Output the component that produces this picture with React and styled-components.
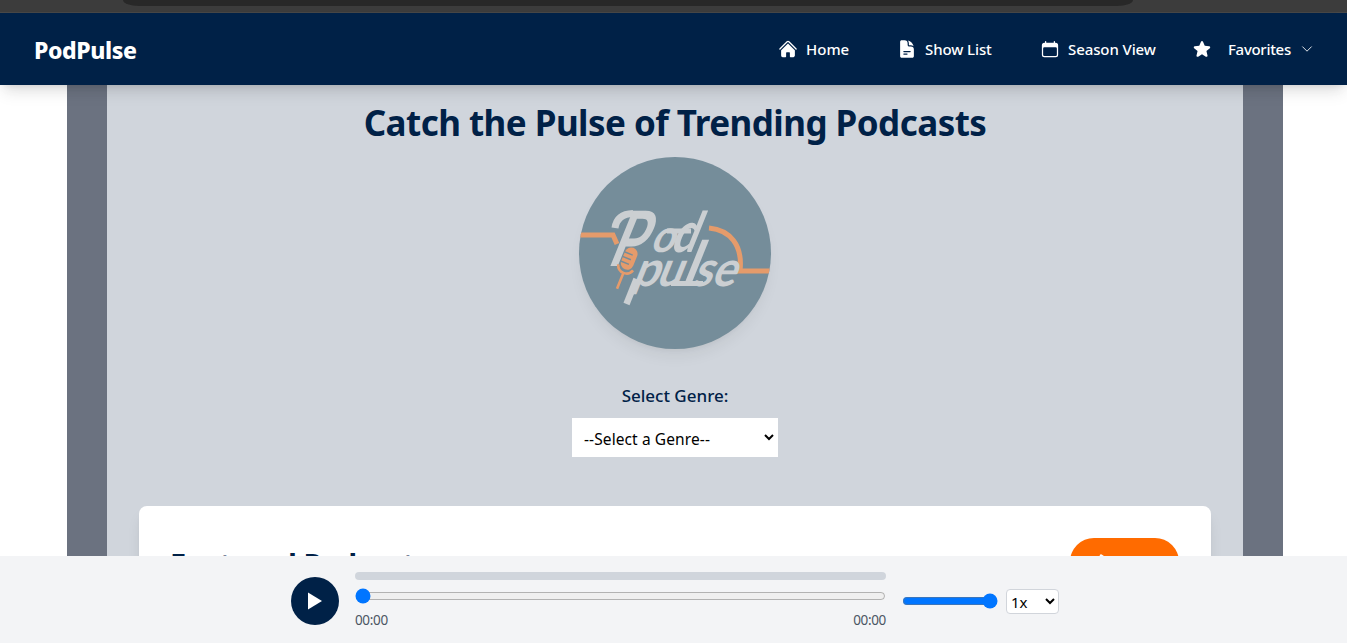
import React from "react";
import styled, { createGlobalStyle } from "styled-components";
import { HiHome, HiDocumentText, HiCalendar, HiStar, HiOutlineChevronDown } from "react-icons/hi2";

const NAVY = "#002147";

const GlobalStyle = createGlobalStyle`
  *, *::before, *::after { box-sizing: border-box; }
  body { margin: 0; background: #fff; font-family: "Noto Sans", "Open Sans", sans-serif; color: ${NAVY}; overflow: hidden; }
`;

const Page = styled.div`
  display: flex;
  flex-direction: column;
  height: 643px;
  overflow: hidden;
`;

const BrowserEdge = styled.div`
  flex: none;
  height: 13px;
  padding: 0 214px 0 123px;
  background: #3c3c3c;
  border-bottom: 1px solid #484848;
`;

const AddressBar = styled.div`
  height: 6px;
  background: #282828;
  border-radius: 0 0 16px 16px / 0 0 6px 6px;
`;

const Header = styled.header`
  flex: none;
  position: relative;
  z-index: 2;
  display: flex;
  align-items: center;
  justify-content: space-between;
  height: 72px;
  padding: 0 33px 0 35px;
  background: ${NAVY};
  color: #fff;
  box-shadow: 0 10px 15px -3px rgba(0, 0, 0, 0.1), 0 4px 6px -4px rgba(0, 0, 0, 0.1), 0 5px 15px -5px rgba(0, 0, 0, 0.06);
`;

const Brand = styled.div`
  font-size: 23px;
  font-weight: 800;
  line-height: 32px;
  letter-spacing: -0.4px;
  padding-top: 2px;
  margin-left: -1px;
`;

const Nav = styled.nav`
  display: flex;
  align-items: center;
`;

const NavItem = styled.a`
  display: flex;
  align-items: center;
  width: ${(p) => p.$width}px;
  gap: ${(p) => p.$gap || 8}px;
  white-space: nowrap;
  font-size: 15px;
  font-weight: 500;
  line-height: 24px;
  letter-spacing: ${(p) => p.$tracking || 0}px;

  svg { flex: none; }
`;

const MenuArrow = styled(HiOutlineChevronDown)`
  margin-left: -7px;
`;

const Main = styled.main`
  flex: 1;
  min-height: 0;
  overflow: hidden;
  width: 1216px;
  margin-left: 67px;
  padding: 18px 32px 0;
  border: solid #6b7280;
  border-width: 0 40px;
  background: #d0d5dc;
  display: flex;
  flex-direction: column;
  align-items: center;
`;

const Title = styled.h1`
  margin: 0;
  font-size: 35px;
  font-weight: 700;
  line-height: 40px;
  letter-spacing: -0.54px;
  white-space: nowrap;
`;

const LogoDisc = styled.div`
  flex: none;
  width: 192px;
  height: 192px;
  margin-top: 14px;
  border-radius: 50%;
  overflow: hidden;
  background: #758d9a;
  box-shadow: 0 10px 15px -3px rgba(0, 0, 0, 0.06), 0 4px 6px -4px rgba(0, 0, 0, 0.06);
`;

const GenreLabel = styled.label`
  margin-top: 33px;
  font-size: 17px;
  font-weight: 500;
  line-height: 28px;
`;

const GenreSelect = styled.select`
  flex: none;
  width: 206px;
  height: 39px;
  margin-top: 8px;
  padding: 2px 0 0 8px;
  border: 0;
  border-right: 1px solid #fff;
  border-radius: 0;
  background: #fff;
  color: #000;
  font: 400 15.5px "Noto Sans", sans-serif;
  letter-spacing: 0.1px;
`;

const Card = styled.section`
  flex: none;
  display: flex;
  justify-content: space-between;
  align-items: flex-start;
  width: 1072px;
  height: 300px;
  margin-top: 49px;
  padding: 32px 32px 0 31px;
  border-radius: 8px;
  background: #fff;
  box-shadow: 0 10px 15px -3px rgba(0, 0, 0, 0.1), 0 4px 6px -4px rgba(0, 0, 0, 0.1);
`;

const CardTitle = styled.h2`
  margin: 6px 0 0;
  font-size: 29px;
  font-weight: 700;
  line-height: 40px;
  letter-spacing: -0.45px;
`;

const PillButton = styled.button`
  width: 109px;
  height: 48px;
  padding: 14px 0 0 28px;
  display: flex;
  align-items: flex-start;
  border: 0;
  border-radius: 24px;
  background: #ff6b00;
  color: #fff;
`;

const Player = styled.footer`
  flex: none;
  position: relative;
  display: flex;
  align-items: flex-start;
  height: 87px;
  padding: 16px 0 0 291px;
  background: #f3f4f6;
`;

const PlayButton = styled.button`
  display: flex;
  align-items: center;
  justify-content: center;
  width: 48px;
  height: 48px;
  margin: 5px 16px 0 0;
  padding: 0;
  border: 0;
  border-radius: 50%;
  background: ${NAVY};
`;

const Timeline = styled.div`
  display: flex;
  flex-direction: column;
  width: 531px;
`;

const Buffer = styled.div`
  height: 8px;
  border-radius: 4px;
  background: #d0d5dc;
`;

const Range = styled.input`
  display: block;
  width: ${(p) => p.$width}px;
  height: 16px;
  margin: ${(p) => p.$margin};
`;

const Times = styled.div`
  display: flex;
  justify-content: space-between;
  margin: 6px 0 0;
  color: #4b5563;
  font-size: 13.5px;
  line-height: 20px;
  letter-spacing: -0.35px;
`;

const SpeedSelect = styled.select`
  width: 53px;
  height: 25px;
  margin: 17px 0 0 8px;
  padding: 1px 1px 0 0;
  border: 1px solid #d1d5db;
  border-radius: 4px;
  background: #fff;
  color: #000;
  font: 400 15px "Noto Sans", sans-serif;
`;

const LogoLetter = styled.text`
  font-family: Lato, sans-serif;
  font-weight: 700;
  font-size: 49px;
  fill: #cbcfd2;
`;

// Each letter stands on its own baseline point; sx and sy stretch it, the skew gives the slant.
const letters = [
  { c: "P", x: 27, y: 109, sx: 1.12, sy: 1.56 },
  { c: "o", x: 70, y: 95, sx: 0.84, sy: 0.93 },
  { c: "d", x: 90, y: 95, sx: 0.9, sy: 1.14 },
  { c: "p", x: 52, y: 129, sx: 0.94, sy: 1 },
  { c: "u", x: 76, y: 129, sx: 0.9, sy: 1 },
  { c: "l", x: 101, y: 129, sx: 1.15, sy: 1.27 },
  { c: "s", x: 112, y: 129, sx: 0.9, sy: 1 },
  { c: "e", x: 131, y: 129, sx: 0.92, sy: 1 },
];

function Logo() {
  return (
    <svg width="192" height="192" viewBox="0 0 192 192">
      <g fill="none" stroke="#e59b6b" strokeWidth="5">
        <path d="M0 78H34L38 87" />
        <path d="M130 71C151 73 164 88 161 114H192M161 114H156" />
      </g>
      {letters.map((l) => (
        <LogoLetter key={l.c + l.x} transform={`translate(${l.x} ${l.y}) skewX(-22) scale(${l.sx} ${l.sy})`}>
          {l.c}
        </LogoLetter>
      ))}
      <g fill="none" stroke="#cbcfd2">
        <path d="M36 71Q38 57 54 56.5" strokeWidth="7" />
        <path d="M88 74H112" strokeWidth="5" />
        <path d="M92 126.5H124" strokeWidth="5" />
        <path d="M47.5 147L57.5 122" strokeWidth="6.5" />
      </g>
      <g transform="translate(50 102) rotate(22)">
        <rect x="-6.5" y="-12" width="13" height="23" rx="6.5" fill="#e59b6b" />
        <path d="M-7-5H2M-7 0H2M-7 5H2" stroke="#758d9a" strokeWidth="1.4" />
        <path d="M-8 9Q-6 15 0 15T8 9M0 15V32" fill="none" stroke="#e59b6b" strokeWidth="2.6" />
      </g>
    </svg>
  );
}

export default function App() {
  return (
    <>
      <GlobalStyle />
      <Page>
        <BrowserEdge><AddressBar /></BrowserEdge>
        <Header>
          <Brand>PodPulse</Brand>
          <Nav>
            <NavItem $width={119}><HiHome size={20} />Home</NavItem>
            <NavItem $width={143} $tracking={-0.1}><HiDocumentText size={20} />Show List</NavItem>
            <NavItem $width={152} $tracking={-0.1}><HiCalendar size={20} />Season View</NavItem>
            <NavItem $width={122} $gap={16} $tracking={-0.3}>
              <HiStar size={20} />Favorites<MenuArrow size={14} />
            </NavItem>
          </Nav>
        </Header>
        <Main>
          <Title>Catch the Pulse of Trending Podcasts</Title>
          <LogoDisc><Logo /></LogoDisc>
          <GenreLabel htmlFor="genre">Select Genre:</GenreLabel>
          <GenreSelect id="genre"><option>--Select a Genre--</option></GenreSelect>
          <Card>
            <CardTitle>Featured Podcasts</CardTitle>
            <PillButton aria-label="Next">
              <svg width="16" height="20" viewBox="0 0 16 20" fill="none" stroke="currentColor" strokeWidth="2.5" strokeLinecap="round">
                <path d="M3 3.5L11 9L3 17" />
              </svg>
            </PillButton>
          </Card>
        </Main>
        <Player>
          <PlayButton aria-label="Play">
            <svg width="14" height="18" viewBox="0 0 14 18"><path d="M0 0.5L14 9L0 17.5Z" fill="#fff" /></svg>
          </PlayButton>
          <Timeline>
            <Buffer />
            <Range type="range" min="0" max="100" defaultValue="0" $width={531} $margin="8px 0 0" />
            <Times><span>00:00</span><span>00:00</span></Times>
          </Timeline>
          <Range type="range" min="0" max="100" defaultValue="100" $width={96} $margin="21px 0 0 16px" />
          <SpeedSelect><option>1x</option></SpeedSelect>
        </Player>
      </Page>
    </>
  );
}
